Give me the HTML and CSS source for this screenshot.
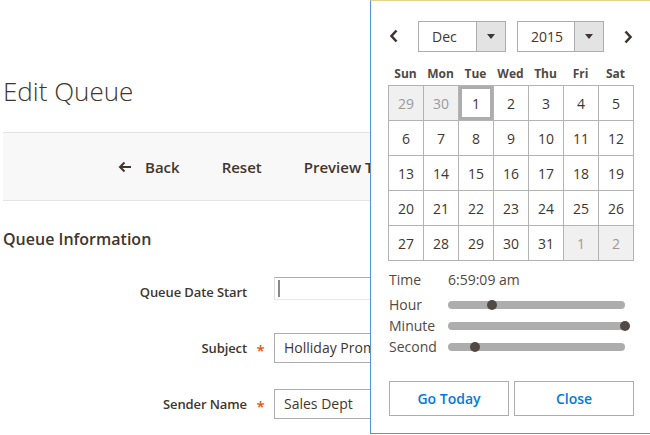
FILE: index.html
```html
<!DOCTYPE html>
<html>
<head>
<meta charset="utf-8">
<link rel="stylesheet" href="styles.css">
</head>
<body>
<div class="page">
  <h1 class="page-title">Edit Queue</h1>
  <div class="toolbar">
    <button class="tb-btn back"><svg width="14" height="12" viewBox="0 0 14 12"><path d="M13 6H2M6.5 1.5L2 6l4.5 4.5" fill="none" stroke="#41362f" stroke-width="2"/></svg><span>Back</span></button>
    <button class="tb-btn">Reset</button>
    <button class="tb-btn clip">Preview Template</button>
  </div>
  <h2 class="section-title">Queue Information</h2>
  <div class="form">
    <div class="row">
      <label class="label">Queue Date Start</label>
      <span class="req"></span>
      <div class="input date"><span class="caret"></span></div>
    </div>
    <div class="row">
      <label class="label">Subject</label>
      <span class="req">*</span>
      <div class="input">Holliday Promotions</div>
    </div>
    <div class="row">
      <label class="label">Sender Name</label>
      <span class="req">*</span>
      <div class="input">Sales Dept</div>
    </div>
  </div>
</div>

<div class="picker">
  <div class="pk-head">
    <button class="nav prev"><svg width="10" height="14" viewBox="0 0 10 14"><path d="M7.5 1.5L2.5 7l5 5.5" fill="none" stroke="#41362f" stroke-width="2.6"/></svg></button>
    <div class="sel month"><span class="sel-text">Dec</span><span class="sel-btn"><span class="tri"></span></span></div>
    <div class="sel year"><span class="sel-text">2015</span><span class="sel-btn"><span class="tri"></span></span></div>
    <button class="nav next"><svg width="10" height="14" viewBox="0 0 10 14"><path d="M2.5 1.5L7.5 7l-5 5.5" fill="none" stroke="#41362f" stroke-width="2.6"/></svg></button>
  </div>
  <div class="dow">
    <span>Sun</span><span>Mon</span><span>Tue</span><span>Wed</span><span>Thu</span><span>Fri</span><span>Sat</span>
  </div>
  <div class="days">
    <span class="other">29</span><span class="other">30</span><span class="today">1</span><span>2</span><span>3</span><span>4</span><span>5</span>
    <span>6</span><span>7</span><span>8</span><span>9</span><span>10</span><span>11</span><span>12</span>
    <span>13</span><span>14</span><span>15</span><span>16</span><span>17</span><span>18</span><span>19</span>
    <span>20</span><span>21</span><span>22</span><span>23</span><span>24</span><span>25</span><span>26</span>
    <span>27</span><span>28</span><span>29</span><span>30</span><span>31</span><span class="other">1</span><span class="other">2</span>
  </div>
  <div class="time">
    <span class="t-label time-row">Time</span><span class="t-val time-row">6:59:09 am</span>
    <span class="t-label">Hour</span><div class="slider"><span class="handle" style="left:25%"></span></div>
    <span class="t-label">Minute</span><div class="slider"><span class="handle" style="left:100%"></span></div>
    <span class="t-label">Second</span><div class="slider"><span class="handle" style="left:15%"></span></div>
  </div>
  <div class="pk-actions">
    <button class="pk-btn">Go Today</button>
    <button class="pk-btn">Close</button>
  </div>
</div>
</body>
</html>
```
FILE: styles.css
```css
* { box-sizing: border-box; }
html, body { margin: 0; padding: 0; }
body {
  width: 650px;
  height: 435px;
  overflow: hidden;
  position: relative;
  font-family: "Open Sans", "Liberation Sans", sans-serif;
  color: #41362f;
  background: #fff;
}
button { font-family: inherit; }
.page {
  width: 371px;
  height: 435px;
  overflow: hidden;
  padding: 74px 0 0 3px;
}
.page-title {
  margin: 0 0 24px 0;
  font-size: 26px;
  line-height: 34px;
  font-weight: 300;
  color: #41362f;
  white-space: nowrap;
}
.toolbar {
  display: flex;
  align-items: center;
  gap: 42px;
  height: 69px;
  background: #f8f8f8;
  border-top: 1px solid #e3e3e3;
  border-bottom: 1px solid #e3e3e3;
  padding-left: 115px;
  white-space: nowrap;
}
.tb-btn {
  border: 0;
  background: none;
  padding: 0;
  font-size: 15px;
  font-weight: 600;
  color: #41362f;
  display: flex;
  align-items: center;
  gap: 13px;
}
.tb-btn.clip {
  min-width: 0;
  flex: 1;
  overflow: hidden;
  justify-content: flex-start;
}
.section-title {
  margin: 25px 0 0 0;
  font-size: 16px;
  line-height: 26px;
  font-weight: 600;
  white-space: nowrap;
}
.form {
  margin-top: 25px;
  display: flex;
  flex-direction: column;
  gap: 26px;
}
.row {
  display: flex;
  align-items: center;
  height: 30px;
  margin-left: -3px;
}
.label {
  flex: none;
  width: 247px;
  text-align: right;
  font-size: 13px;
  font-weight: 600;
  letter-spacing: -0.1px;
  white-space: nowrap;
}
.req {
  flex: none;
  width: 27px;
  text-align: center;
  color: #eb5202;
  font-size: 15px;
  font-weight: 600;
  padding-top: 4px;
}
.input {
  flex: 1;
  min-width: 0;
  height: 30px;
  border: 1px solid #adadad;
  border-right: 0;
  font-size: 14px;
  line-height: 28px;
  padding-left: 9px;
  white-space: nowrap;
  overflow: hidden;
}
.input.date {
  align-self: flex-start;
  height: 23px;
  border-color: #adadad #e4e8ee #e4e8ee #e0e0e0;
  padding-left: 3px;
}
.caret {
  display: block;
  width: 2px;
  height: 17px;
  margin-top: 2px;
  background: #8a8a8a;
}

/* date picker overlay */
.picker {
  position: absolute;
  left: 370px;
  top: 0;
  width: 300px;
  height: 434px;
  background: #fff;
  border: 1px solid #4d9ad4;
  border-top-color: #e6d48e;
  padding: 20px 0 0 17px;
}
.pk-head {
  display: flex;
  align-items: center;
  width: 245px;
  height: 30px;
}
.nav {
  border: 0;
  background: none;
  padding: 0;
  display: flex;
  align-items: center;
  height: 30px;
}
.nav.prev { width: 30px; justify-content: flex-start; padding-left: 1px; }
.nav.next { width: 29px; justify-content: flex-end; padding-top: 2px; }
.sel {
  display: flex;
  height: 31px;
  border: 1px solid #adadad;
  font-size: 14px;
}
.sel.month { width: 88px; }
.sel.year { width: 87px; margin-left: 11px; }
.sel-text {
  flex: 1;
  padding-left: 13px;
  line-height: 29px;
}
.sel-btn {
  width: 29px;
  background: #e3e3e3;
  border-left: 1px solid #adadad;
  display: flex;
  align-items: center;
  justify-content: center;
}
.tri {
  width: 0;
  height: 0;
  border-left: 4px solid transparent;
  border-right: 4px solid transparent;
  border-top: 5px solid #41362f;
}
.dow {
  display: grid;
  grid-template-columns: repeat(7, 35px);
  margin-top: 10px;
  height: 24px;
  align-items: center;
  font-size: 12px;
  font-weight: 700;
  color: #514943;
  text-align: center;
}
.days {
  display: grid;
  grid-template-columns: repeat(7, 35px);
  grid-auto-rows: 35px;
  width: 246px;
  border-left: 1px solid #b3b3b3;
  border-top: 1px solid #b3b3b3;
}
.days span {
  border-right: 1px solid #b3b3b3;
  border-bottom: 1px solid #b3b3b3;
  display: flex;
  align-items: center;
  justify-content: center;
  font-size: 14px;
  color: #41362f;
  background: #fff;
}
.days span.other { background: #f0f0f0; color: #9a9a9a; }
.days span.today { box-shadow: inset 0 0 0 3px #adadad; }
.time {
  display: grid;
  grid-template-columns: 59px 177px;
  grid-template-rows: 26px 21px 21px 21px;
  align-items: center;
  margin-top: 7px;
  padding-left: 1px;
  font-size: 14px;
  color: #514943;
}
.time .time-row { align-self: start; line-height: 24px; }
.t-label { white-space: nowrap; }
.slider {
  position: relative;
  height: 8px;
  border-radius: 4px;
  background: #adadad;
}
.handle {
  position: absolute;
  top: -1px;
  width: 10px;
  height: 10px;
  margin-left: -5px;
  border-radius: 50%;
  background: #514943;
}
.pk-actions {
  display: flex;
  gap: 5px;
  margin-top: 24px;
  padding-left: 1px;
}
.pk-btn {
  width: 120px;
  height: 35px;
  border: 1px solid #adadad;
  background: #fff;
  color: #007bdb;
  font-size: 14px;
  font-weight: 600;
  padding: 0;
}
```
